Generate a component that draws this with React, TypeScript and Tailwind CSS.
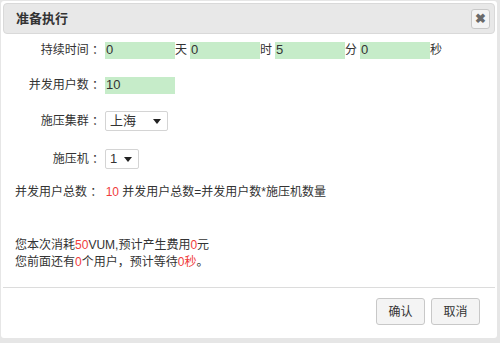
import type { ReactNode } from 'react';

const FONT = '"Liberation Sans", "Noto Sans CJK SC", sans-serif';

function Field({ value, width = 'w-[70px]' }: { value: string; width?: string }) {
  return (
    <div className={`${width} flex h-[17px] items-center bg-[#c6ecc9] pl-[1px] text-[13px] text-[#333]`}>
      {value}
    </div>
  );
}

function Unit({ children }: { children: ReactNode }) {
  return <span className="w-[15px] text-[12px] text-[#333]">{children}</span>;
}

function Label({ children }: { children: ReactNode }) {
  return (
    <span className="w-[89px] shrink-0 text-right text-[12px] text-[#333]">{children}</span>
  );
}

function FakeSelect({ value, width }: { value: string; width: string }) {
  return (
    <div
      className={`${width} ml-[1px] flex h-[20px] items-center justify-between rounded-[2px] border border-[#d4d4d4] bg-white pl-[4px] pr-[6px] text-[13px] text-[#333]`}
    >
      <span>{value}</span>
      <span className="h-0 w-0 border-x-[4px] border-t-[5px] border-x-transparent border-t-[#222]" />
    </div>
  );
}

export default function App() {
  return (
    <div className="h-[343px] w-[500px] overflow-hidden bg-[#e6e6e6] pl-[1px] pt-[1px]" style={{ fontFamily: FONT }}>
      <div className="flex h-[337px] w-[496px] flex-col rounded-[3px] bg-white">
        {/* header */}
        <div className="mx-[2px] mt-[2px] flex h-[31px] items-center justify-between rounded-[4px] border border-[#d9d9d9] bg-[#e8e8e8] pl-[12px] pr-[4px]">
          <span className="text-[13px] font-bold text-[#333]">准备执行</span>
          <button
            type="button"
            className="flex h-[20px] w-[19px] items-center justify-center rounded-[3px] border border-[#c8c8c8] bg-[#f4f4f4] text-[13px] font-bold leading-none text-[#6a6a6a]"
          >
            ✖
          </button>
        </div>

        <div className="flex flex-col pl-[14px]">
          <div className="mt-[7px] flex items-center">
            <Label>持续时间 ：</Label>
            <div className="ml-[1px] flex items-center">
              <Field value="0" />
              <Unit>天</Unit>
              <Field value="0" />
              <Unit>时</Unit>
              <Field value="5" />
              <Unit>分</Unit>
              <Field value="0" />
              <Unit>秒</Unit>
            </div>
          </div>

          <div className="mt-[17px] flex items-center">
            <Label>并发用户数 ：</Label>
            <div className="ml-[1px]">
              <Field value="10" />
            </div>
          </div>

          <div className="mt-[17px] flex items-center">
            <Label>施压集群 ：</Label>
            <FakeSelect value="上海" width="w-[63px]" />
          </div>

          <div className="mt-[18px] flex items-center">
            <Label>施压机 ：</Label>
            <FakeSelect value="1" width="w-[34px]" />
          </div>

          <p className="mt-[15px] text-[12px] leading-[17px] text-[#333]">
            并发用户总数 ：&nbsp;<span className="text-[#f03c3c]">10</span> 并发用户总数=并发用户数*施压机数量
          </p>

          <p className="mt-[36px] text-[12px] leading-[17px] text-[#333]">
            您本次消耗<span className="text-[#f03c3c]">50</span>VUM,预计产生费用<span className="text-[#f03c3c]">0</span>元
          </p>
          <p className="text-[12px] leading-[17px] text-[#333]">
            您前面还有<span className="text-[#f03c3c]">0</span>个用户，预计等待<span className="text-[#f03c3c]">0秒</span>。
          </p>
        </div>

        <div className="mx-[2px] mt-[16px] border-t border-[#dcdcdc]" />

        <div className="mt-[10px] flex justify-end gap-[6px] pr-[17px]">
          <button
            type="button"
            className="h-[27px] w-[49px] rounded-[3px] border border-[#c8c8c8] bg-[#f4f4f4] text-[12px] text-[#333]"
          >
            确认
          </button>
          <button
            type="button"
            className="h-[27px] w-[49px] rounded-[3px] border border-[#c8c8c8] bg-[#f4f4f4] text-[12px] text-[#333]"
          >
            取消
          </button>
        </div>
      </div>
    </div>
  );
}
